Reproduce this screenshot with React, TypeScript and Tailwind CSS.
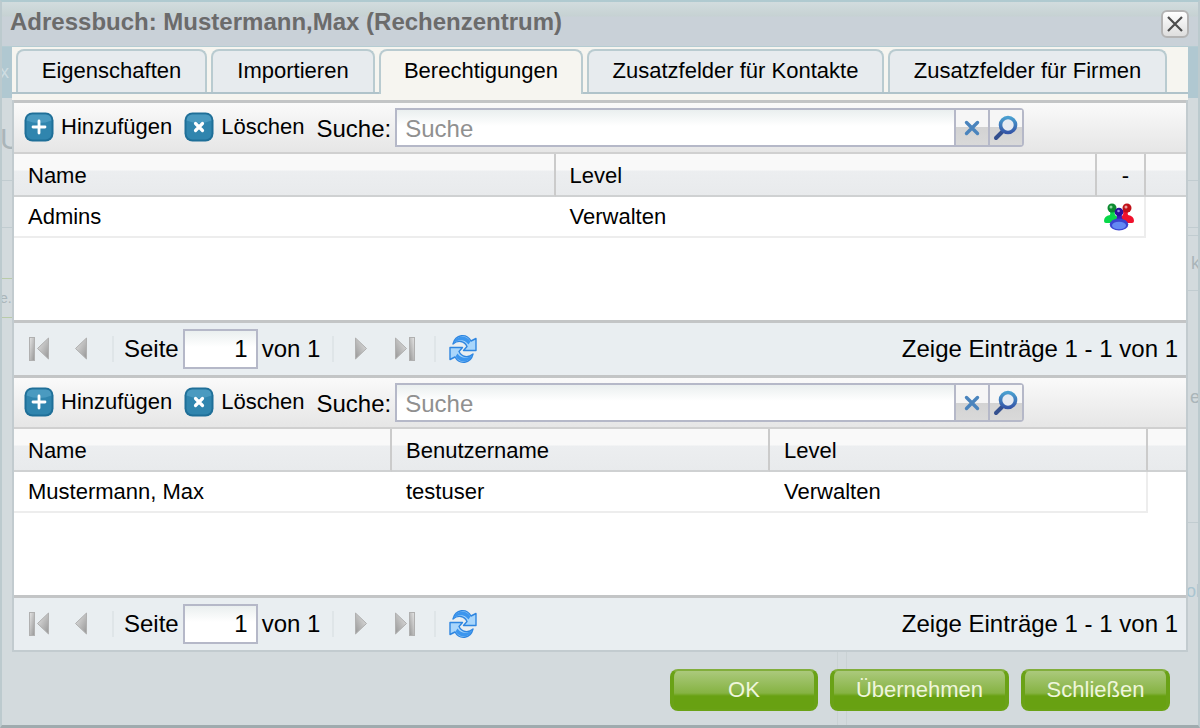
import { useState } from 'react';

const tabs = [
  { label: 'Eigenschaften', width: 'w-[191px]' },
  { label: 'Importieren', width: 'w-[164px]' },
  { label: 'Berechtigungen', width: 'w-[204px]' },
  { label: 'Zusatzfelder für Kontakte', width: 'w-[297px]' },
  { label: 'Zusatzfelder für Firmen', width: 'w-[279px]' },
];

function AddIcon() {
  return (
    <svg viewBox="0 0 30 30" className="w-[30px] h-[30px] shrink-0" aria-hidden="true">
      <rect x="0.5" y="0.5" width="29" height="29" rx="8" fill="#1f6f98" />
      <rect x="2.5" y="2.5" width="25" height="25" rx="6" fill="#3085ae" />
      <path d="M8 2.500h14q5 0 5.500 6q-12 5-25 0q.500-6 5.500-6z" fill="#55a3c8" opacity="0.7" />
      <path d="M15 9v12M9 15h12" stroke="#fff" strokeWidth="2.800" strokeLinecap="round" />
    </svg>
  );
}

function RemoveIcon() {
  return (
    <svg viewBox="0 0 30 30" className="w-[30px] h-[30px] shrink-0" aria-hidden="true">
      <rect x="0.5" y="0.5" width="29" height="29" rx="8" fill="#1f6f98" />
      <rect x="2.5" y="2.5" width="25" height="25" rx="6" fill="#3085ae" />
      <path d="M8 2.500h14q5 0 5.500 6q-12 5-25 0q.500-6 5.500-6z" fill="#55a3c8" opacity="0.7" />
      <path d="M11.500 11.500l7 7M18.500 11.500l-7 7" stroke="#fff" strokeWidth="3.200" strokeLinecap="round" />
    </svg>
  );
}

function ClearIcon() {
  return (
    <svg viewBox="0 0 16 16" className="w-4 h-4" aria-hidden="true">
      <path d="M2.500 2.500l11 11M13.500 2.500l-11 11" stroke="#4a84bd" strokeWidth="3.400" strokeLinecap="round" />
    </svg>
  );
}

function SearchIcon() {
  return (
    <svg viewBox="0 0 26 26" className="w-[26px] h-[26px]" aria-hidden="true">
      <defs>
        <linearGradient id="lens" x1="0" y1="0" x2="0" y2="1">
          <stop offset="0" stopColor="#4a9fd0" />
          <stop offset="1" stopColor="#3557a8" />
        </linearGradient>
      </defs>
      <path d="M10 16l-7 7" stroke="#34508f" strokeWidth="4" strokeLinecap="round" />
      <circle cx="15" cy="10" r="7.500" fill="#e6ebf2" stroke="url(#lens)" strokeWidth="3.600" />
    </svg>
  );
}

function PageIcon({ bar, flip }: { bar?: boolean; flip?: boolean }) {
  return (
    <svg viewBox="0 0 22 26" className={flip ? 'w-[22px] h-[26px] -scale-x-100' : 'w-[22px] h-[26px]'} aria-hidden="true">
      <defs>
        <linearGradient id="steel" x1="0" y1="0" x2="1" y2="1">
          <stop offset="0" stopColor="#e6e6e6" />
          <stop offset="1" stopColor="#969696" />
        </linearGradient>
      </defs>
      {bar && <rect x="1.500" y="1.500" width="5" height="23" fill="url(#steel)" stroke="#b0b0b0" />}
      <path d="M20.500 2v21l-11-10.500z" fill="url(#steel)" stroke="#b0b0b0" />
    </svg>
  );
}

function RefreshArrow() {
  return (
    <>
      <path
        d="M5 10C7.500 0 18.500 -1 23 7L28 4.500V16.500H15.500L19 12.500C16.500 7 10 5.500 5 10z"
        fill="#a9d6fb"
        stroke="#2f86e0"
        strokeWidth="1.400"
        strokeLinejoin="round"
      />
      <path d="M5.500 9.500C8 1 18 0 22.500 7.500L20.500 10.500C16.500 5 10.500 5 5.500 9.500z" fill="#3c96ee" />
    </>
  );
}

function RefreshIcon() {
  return (
    <svg viewBox="0 0 30 30" className="w-[30px] h-[30px]" aria-hidden="true">
      <RefreshArrow />
      <g transform="rotate(180 15 15)">
        <RefreshArrow />
      </g>
    </svg>
  );
}

function GroupIcon() {
  return (
    <svg viewBox="0 0 32 28" className="w-8 h-7" role="img" aria-label="Gruppe">
      <path d="M1 18q0-5 6-6q1-2-1-5h7q-2 3-1 5l4 3v5H3q-2 0-2-2z" fill="#08d84a" />
      <path d="M31 18q0-5-6-6q-1-2 1-5h-7q2 3 1 5l-4 3v5h13q2 0 2-2z" fill="#f0102c" />
      <circle cx="9" cy="5" r="4.500" fill="#0c8a30" />
      <circle cx="8" cy="4" r="1.500" fill="#8fd6a0" />
      <circle cx="24" cy="5" r="4.500" fill="#c01018" />
      <circle cx="23" cy="4" r="1.500" fill="#eaa0a4" />
      <path d="M13.500 11h5.500q-1 4 2 7h-9q3-3 1.500-7z" fill="#3a1fb4" />
      <circle cx="16" cy="9" r="4.300" fill="#2d0f9c" />
      <circle cx="15.500" cy="8" r="1.300" fill="#9a8be0" />
      <ellipse cx="16" cy="21.500" rx="9.300" ry="6" fill="#3a44d0" />
      <ellipse cx="16" cy="22.500" rx="7" ry="3.800" fill="#6488f4" />
    </svg>
  );
}

function Toolbar({ id }: { id: string }) {
  return (
    <div className="flex items-center h-[51px] shrink-0 pl-[10px] border-b-2 border-[#d0d0d0] bg-linear-to-b from-[#fafafa] to-[#e6e6e6]">
      <button className="flex items-center gap-[7px] mr-3 pb-px">
        <AddIcon />
        Hinzufügen
      </button>
      <button className="flex items-center gap-[7px] mr-3 pb-px">
        <RemoveIcon />
        Löschen
      </button>
      <label htmlFor={id} className="text-2xl mr-1 pt-[2px]">Suche:</label>
      <div className="flex flex-1 max-w-[629px] h-[39px] border-2 border-[#b5b8c8] rounded-r">
        <input
          id={id}
          placeholder="Suche"
          className="flex-1 min-w-0 px-2 pt-[2px] text-2xl outline-none placeholder:text-[#909090] bg-[linear-gradient(#eaefef,#fff_16px)]"
        />
        <button
          aria-label="Suche leeren"
          className="flex items-center justify-center w-[34px] border-l-2 border-[#b5b8c8] bg-[linear-gradient(#f6f6f6_50%,#d3d3d3_50%,#d9d9d9)]"
        >
          <ClearIcon />
        </button>
        <button
          aria-label="Suchen"
          className="flex items-center justify-center w-[34px] border-l-2 border-[#b5b8c8] bg-[linear-gradient(#f6f6f6_50%,#d3d3d3_50%,#d9d9d9)]"
        >
          <SearchIcon />
        </button>
      </div>
    </div>
  );
}

function Separator() {
  return <div className="w-[2px] h-[26px] bg-[#dfe5e8]" />;
}

function Pager({ id }: { id: string }) {
  return (
    <div className="flex items-center h-[55px] shrink-0 pl-[14px] pr-2 border-t-3 border-[#c3c5c6] bg-[#e9eef1] text-2xl">
      <button aria-label="Erste Seite" className="mr-4"><PageIcon bar /></button>
      <button aria-label="Vorherige Seite" className="mr-6"><PageIcon /></button>
      <Separator />
      <label htmlFor={id} className="ml-[10px] mr-1">Seite</label>
      <input
        id={id}
        defaultValue="1"
        className="w-[75px] h-10 px-2 text-right outline-none border-2 border-[#b5b8c8] bg-[linear-gradient(#eaefef,#fff_16px)]"
      />
      <span className="ml-1 mr-3">von 1</span>
      <Separator />
      <button aria-label="Nächste Seite" className="ml-5 mr-[18px]"><PageIcon flip /></button>
      <button aria-label="Letzte Seite" className="mr-[18px]"><PageIcon bar flip /></button>
      <Separator />
      <button aria-label="Aktualisieren" className="ml-3"><RefreshIcon /></button>
      <span className="ml-auto">Zeige Einträge 1 - 1 von 1</span>
    </div>
  );
}

const headCell =
  'h-[43px] pl-[14px] pt-[2px] font-normal border-b-2 border-[#cfd1d2] border-r-2 border-r-[#cbcbcb]';
const bodyCell = 'h-[41px] pl-[14px] border-b-2 border-[#ededed]';
const headRow = 'text-left bg-[linear-gradient(#f9f9f9_16px,#eceef0_17px,#e8eaec)]';

function GroupGrid() {
  return (
    <section className="flex-1 flex flex-col border-t-3 border-[#c3c5c6]">
      <Toolbar id="group-search" />
      <div className="flex-1 bg-white">
        <table className="w-full table-fixed border-separate border-spacing-0">
          <colgroup>
            <col />
            <col />
            <col className="w-[49px]" />
            <col className="w-10" />
          </colgroup>
          <thead>
            <tr className={headRow}>
              <th className={headCell}>Name</th>
              <th className={headCell}>Level</th>
              <th className={`${headCell} pr-1 text-center`}>-</th>
              <td className="border-b-2 border-[#cfd1d2]" />
            </tr>
          </thead>
          <tbody>
            <tr>
              <td className={bodyCell}>Admins</td>
              <td className={bodyCell}>Verwalten</td>
              <td className="border-b-2 border-r-2 border-[#ededed]">
                <div className="flex pl-[6px]"><GroupIcon /></div>
              </td>
              <td />
            </tr>
          </tbody>
        </table>
      </div>
      <Pager id="group-page" />
    </section>
  );
}

function UserGrid() {
  return (
    <section className="flex-1 flex flex-col border-t-3 border-[#c3c5c6]">
      <Toolbar id="user-search" />
      <div className="flex-1 bg-white">
        <table className="w-full table-fixed border-separate border-spacing-0">
          <colgroup>
            <col />
            <col />
            <col />
            <col className="w-[38px]" />
          </colgroup>
          <thead>
            <tr className={headRow}>
              <th className={headCell}>Name</th>
              <th className={headCell}>Benutzername</th>
              <th className={headCell}>Level</th>
              <td className="border-b-2 border-[#cfd1d2]" />
            </tr>
          </thead>
          <tbody>
            <tr>
              <td className={bodyCell}>Mustermann, Max</td>
              <td className={bodyCell}>testuser</td>
              <td className={`${bodyCell} border-r-2`}>Verwalten</td>
              <td />
            </tr>
          </tbody>
        </table>
      </div>
      <Pager id="user-page" />
    </section>
  );
}

/* The dimmed page shows faintly through the window frame */
function Backdrop() {
  return (
    <div aria-hidden="true" className="absolute inset-0 overflow-hidden text-lg text-[#aab5b9]">
      <div className="absolute inset-x-0 top-[47px] h-[51px] bg-[#b0c8d1]" />
      <span className="absolute left-0 top-[58px] text-[#cfdde2]">x</span>
      <div className="absolute left-0 top-[180px] w-3 h-px bg-[#c1ccd0]" />
      <div className="absolute left-0 top-[227px] w-3 h-px bg-[#c1ccd0]" />
      <div className="absolute left-0 top-[278px] w-3 h-[40px] border-y border-[#b9cba8]" />
      <span className="absolute left-0 top-[119px] text-3xl leading-10">U</span>
      <span className="absolute left-0 top-[284px] text-sm leading-7">e.</span>
      <div className="absolute right-0 top-[180px] w-3 h-px bg-[#c1ccd0]" />
      <div className="absolute right-0 top-[227px] w-3 h-[9px] border-y border-[#c1ccd0]" />
      <div className="absolute right-0 top-[290px] w-3 h-px bg-[#c1ccd0]" />
      <div className="absolute right-0 top-[522px] w-3 h-px bg-[#c1ccd0]" />
      <span className="absolute right-0 top-[249px]">k</span>
      <span className="absolute right-0 top-[383px]">e</span>
      <span className="absolute right-0 top-[577px] text-[#a9c4d0]">ol</span>
      <div className="absolute left-[837px] bottom-0 w-[10px] h-[77px] border-x border-[#cad2d4]" />
    </div>
  );
}

export default function App() {
  const [active, setActive] = useState(2);

  const action =
    'h-[42px] rounded-lg text-[#eff6dc] border-y-2 border-x-4 border-[#6aa216] border-t-[#82ae3c] bg-[linear-gradient(#abc97c,#86b343_22px,#68a112_25px)]';

  return (
    <div
      role="dialog"
      aria-labelledby="window-title"
      className="relative min-h-screen flex flex-col bg-[#d3dadd] text-black text-[22px] leading-7 font-['Liberation_Sans',Arial,sans-serif]"
    >
      <Backdrop />
      <div className="relative flex-1 flex flex-col border-t-2 border-x-2 border-b-3 border-t-[#b0cad0] border-x-[#bccace] border-b-[#9fabae]">
        <header className="flex items-center h-[45px] shrink-0 pl-2 pr-[9px] border-b border-[#b5ccd2] bg-[linear-gradient(#d2dcde,#c6d2d3_14px,#c9d1d8_15px)]">
          <h1 id="window-title" className="flex-1 pb-1 text-2xl font-bold text-[#6b6b6b]">
            Adressbuch: Mustermann,Max (Rechenzentrum)
          </h1>
          <button
            aria-label="Schließen"
            className="flex items-center justify-center size-7 rounded-md border-2 border-[#b4b4b4] bg-linear-to-b from-white to-[#dedede]"
          >
            <svg viewBox="0 0 18 18" className="w-[18px] h-[18px]" aria-hidden="true">
              <path d="M2 2l14 14M16 2L2 16" stroke="#4c4c4c" strokeWidth="2.200" />
            </svg>
          </button>
        </header>

        <main className="flex-1 flex flex-col mx-[10px]">
          <div role="tablist" className="flex items-end gap-1 h-[47px] shrink-0 px-1 border-b-2 border-[#b0c3ca] bg-[#f6f5f0]">
            {tabs.map((tab, i) => (
              <button
                key={tab.label}
                role="tab"
                aria-selected={i === active}
                onClick={() => setActive(i)}
                className={`${tab.width} border-2 border-b-0 border-[#b9cbd0] rounded-t-lg whitespace-nowrap ${
                  i === active ? 'h-[45px] pb-[3px] -mb-[2px] bg-[#f6f5f0]' : 'h-[43px] pb-px bg-[#e7ebee]'
                }`}
              >
                {tab.label}
              </button>
            ))}
          </div>
          <div className="h-[6px] shrink-0 bg-[#f6f5f0]" />
          <div className="flex-1 flex flex-col border-x-2 border-b-2 border-[#c2cbcf]">
            <GroupGrid />
            <UserGrid />
          </div>
        </main>

        <footer className="flex justify-end gap-3 shrink-0 pt-[17px] pb-[14px] pr-7">
          <button className={`${action} w-[148px]`}>OK</button>
          <button className={`${action} w-[179px]`}>Übernehmen</button>
          <button className={`${action} w-[149px]`}>Schließen</button>
        </footer>
      </div>
    </div>
  );
}
